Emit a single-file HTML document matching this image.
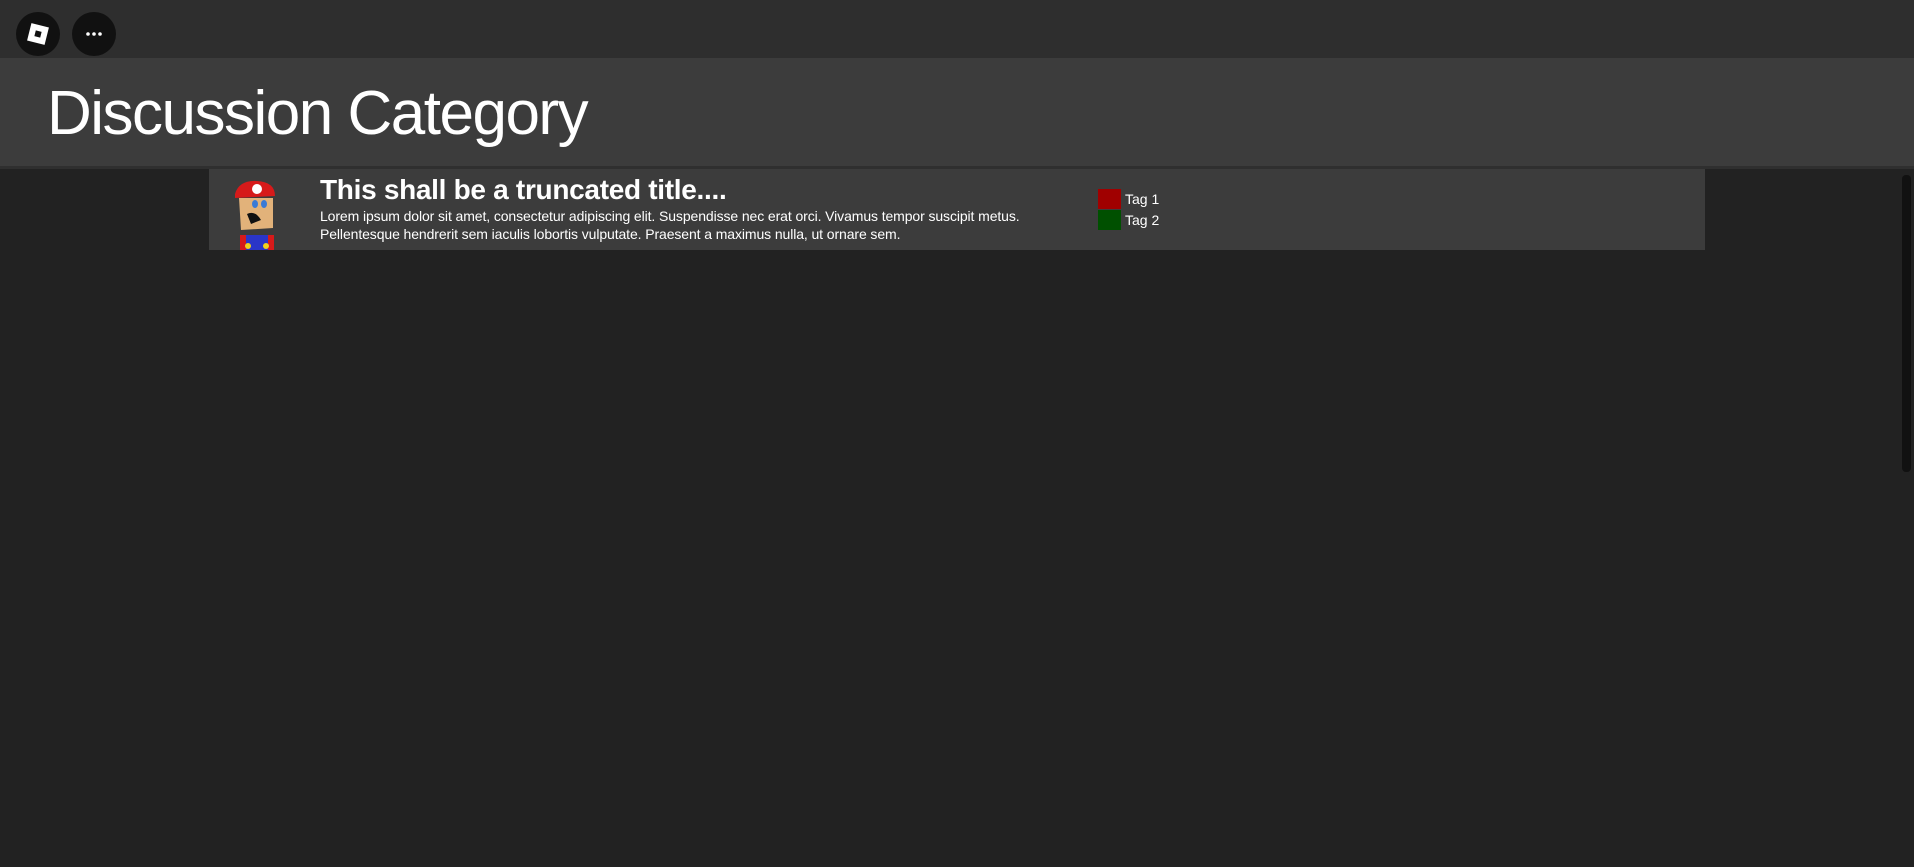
<!DOCTYPE html>
<html><head><style>
body{margin:0;width:1914px;height:867px;background:#222;font-family:"Liberation Sans",sans-serif;overflow:hidden;position:relative;color:#fff}
.top{position:absolute;left:0;top:0;width:1914px;height:58px;background:#2e2e2e}
.circ{position:absolute;top:12px;width:44px;height:44px;border-radius:50%;background:#111}
.hdr{position:absolute;left:0;top:58px;width:1914px;height:108px;background:#3c3c3c;border-bottom:3px solid #2f2f2f}
.hdr h1{margin:0;position:absolute;left:47px;top:20px;font-weight:normal;font-size:62px;letter-spacing:-1.5px}
.card{position:absolute;left:209px;top:169px;width:1496px;height:81px;background:#3c3c3c}
.t{position:absolute;left:111px;top:5px;font-weight:bold;font-size:28px;letter-spacing:-0.3px}
.b{position:absolute;left:111px;top:38px;font-size:14px;line-height:18px;width:760px;letter-spacing:-0.1px}
.tag{position:absolute;left:889px;width:23px;height:20px}
.tl{position:absolute;left:916px;font-size:14px}
.sb{position:absolute;left:1902px;top:175px;width:9px;height:297px;background:#111;border-radius:4px}
</style></head><body>
<div class="top"></div>
<div class="circ" style="left:16px"><div style="position:absolute;left:13px;top:13px;width:18px;height:18px;background:#fff;transform:rotate(14deg)"><div style="position:absolute;left:6px;top:6px;width:6px;height:6px;background:#111"></div></div></div>
<div class="circ" style="left:72px"><svg width="44" height="44"><circle cx="16" cy="22" r="1.8" fill="#fff"/><circle cx="22" cy="22" r="1.8" fill="#fff"/><circle cx="28" cy="22" r="1.8" fill="#fff"/></svg></div>
<div class="hdr"><h1>Discussion Category</h1></div>
<div class="card">
<svg style="position:absolute;left:22px;top:11px" width="50" height="70">
<path d="M4 14 Q8 0 26 1 Q44 2 44 16 L4 18Z" fill="#d61a1a"/>
<circle cx="26" cy="9" r="5" fill="#fff"/>
<path d="M8 18 L42 18 L42 48 L10 50Z" fill="#e2b27a"/>
<ellipse cx="24" cy="24" rx="3" ry="4" fill="#3a7ad6"/><ellipse cx="33" cy="24" rx="3" ry="4" fill="#3a7ad6"/>
<path d="M16 34 Q24 30 30 40 L20 44Z" fill="#111"/>
<rect x="9" y="55" width="34" height="15" fill="#d61a1a"/><rect x="15" y="55" width="22" height="15" fill="#2a35c8"/>
<circle cx="17" cy="66" r="3" fill="#f2d21a"/><circle cx="35" cy="66" r="3" fill="#f2d21a"/>
</svg>
<div class="t">This shall be a truncated title....</div>
<div class="b">Lorem ipsum dolor sit amet, consectetur adipiscing elit. Suspendisse nec erat orci. Vivamus tempor suscipit metus. Pellentesque hendrerit sem iaculis lobortis vulputate. Praesent a maximus nulla, ut ornare sem.</div>
<div class="tag" style="top:20px;background:#a00000"></div><div class="tl" style="top:22px">Tag 1</div>
<div class="tag" style="top:41px;background:#005000"></div><div class="tl" style="top:43px">Tag 2</div>
</div>
<div class="sb"></div>
</body></html>
